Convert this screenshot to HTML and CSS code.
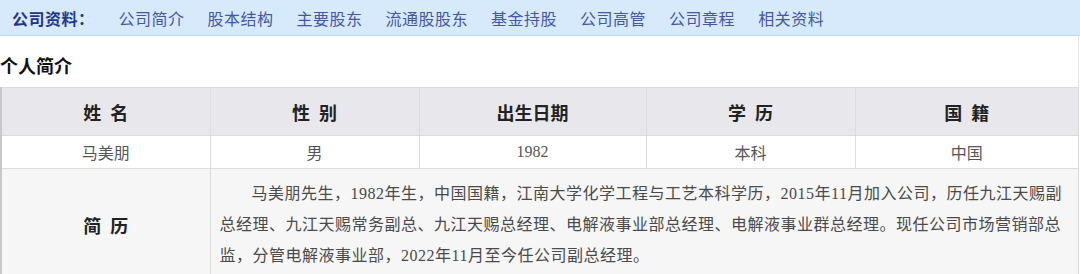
FILE: index.html
```html
<!DOCTYPE html>
<html lang="zh-CN">

<head>
    <meta charset="UTF-8" />
    <meta name="viewport" content="width=device-width, initial-scale=1" />
    <title>公司高管</title>
    <link rel="stylesheet" href="styles.css">
</head>

<body>
    <div class="nav">
        <span class="nav-label">公司资料：</span>
        <a href="#">公司简介</a>
        <a href="#">股本结构</a>
        <a href="#">主要股东</a>
        <a href="#">流通股股东</a>
        <a href="#">基金持股</a>
        <a href="#">公司高管</a>
        <a href="#">公司章程</a>
        <a href="#">相关资料</a>
    </div>

    <div class="content">
        <h2 class="section-title">个人简介</h2>
        <table class="profile">
            <colgroup>
                <col style="width: 209px">
                <col style="width: 209px">
                <col style="width: 227px">
                <col style="width: 209px">
                <col>
            </colgroup>
            <tr class="head-row">
                <th>姓&ensp;名</th>
                <th>性&ensp;别</th>
                <th>出生日期</th>
                <th>学&ensp;历</th>
                <th>国&ensp;籍</th>
            </tr>
            <tr class="data-row">
                <td>马美朋</td>
                <td>男</td>
                <td>1982</td>
                <td>本科</td>
                <td>中国</td>
            </tr>
            <tr class="bio-row">
                <th>简&ensp;历</th>
                <td colspan="4" class="bio">马美朋先生，1982年生，中国国籍，江南大学化学工程与工艺本科学历，2015年11月加入公司，历任九江天赐副总经理、九江天赐常务副总、九江天赐总经理、电解液事业部总经理、电解液事业群总经理。现任公司市场营销部总监，分管电解液事业部，2022年11月至今任公司副总经理。</td>
            </tr>
        </table>
    </div>
</body>

</html>
```

FILE: styles.css
```css
body {
    margin: 0;
    font-family: "Liberation Serif", "Noto Sans CJK SC", serif;
    background-color: #fff;
    color: #555;
}

.nav {
    height: 35px;
    display: flex;
    align-items: center;
    padding-left: 12px;
    background-color: #d6eafc;
    border-bottom: 1px solid #bcd6ef;
    font-size: 16px;
    letter-spacing: 0.5px;
}

.nav-label {
    font-weight: bold;
    color: #23358a;
    margin-right: 24px;
}

.nav a {
    color: #4656a6;
    text-decoration: none;
    margin-right: 23px;
}

.content {
    width: 1078px;
    border-right: 1px solid #e4e4e4;
}

.section-title {
    margin: 0;
    height: 51px;
    line-height: 62px;
    font-size: 18px;
    color: #111;
    box-sizing: border-box;
}

.profile {
    width: 1079px;
    border-collapse: collapse;
    table-layout: fixed;
    border-left: 2px solid #c8c8cc;
}

.profile th,
.profile td {
    border: 1px solid #dcdcdc;
    text-align: center;
    padding: 0;
}

.head-row th {
    height: 47px;
    background-color: #e8e8ec;
    color: #222;
    font-size: 18px;
    font-weight: bold;
}

.data-row td {
    height: 32px;
    font-size: 16px;
    color: #555;
    border-bottom: 1px dotted #c8c8c8;
}

.bio-row {
    background-color: #f6f6f6;
}

.bio-row th {
    color: #222;
    font-size: 18px;
    font-weight: bold;
}

.bio {
    text-align: left !important;
    padding: 9px 9px 9px !important;
    font-size: 16px;
    line-height: 31px;
    letter-spacing: 0.5px;
    text-indent: 2em;
    color: #4a4a4a;
}
```
